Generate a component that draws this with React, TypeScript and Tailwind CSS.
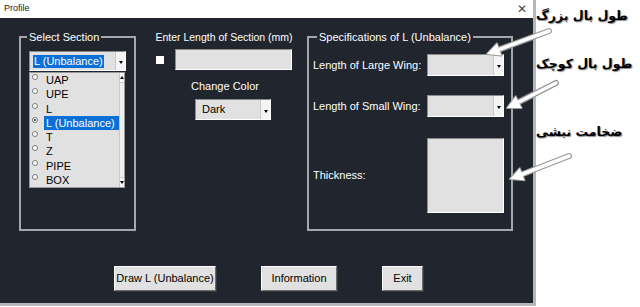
import React from "react";

const sections = ["UAP", "UPE", "L", "L (Unbalance)", "T", "Z", "PIPE", "BOX"];

function DropArrow() {
  return (
    <div className="w-[10px] self-stretch bg-[#f4f4f4] border-l border-[#c8c8c8] flex items-center justify-center">
      <div className="w-0 h-0 border-l-[2.5px] border-r-[2.5px] border-t-[3px] border-l-transparent border-r-transparent border-t-black mt-[3px]" />
    </div>
  );
}

function Combo({ w, h, children }: { w: string; h: string; children?: React.ReactNode }) {
  return (
    <div className={`${w} ${h} flex bg-[#e1e1e1] border border-t-[#8a8a8a] border-l-[#8a8a8a] border-r-[#ffffff] border-b-[#ffffff]`}>
      <div className="flex-1 flex items-center pl-[3px]">{children}</div>
      <DropArrow />
    </div>
  );
}

function Arrow({ x1, y1, x2, y2 }: { x1: number; y1: number; x2: number; y2: number }) {
  const dx = x2 - x1;
  const dy = y2 - y1;
  const len = Math.sqrt(dx * dx + dy * dy);
  const ux = dx / len;
  const uy = dy / len;
  const bx = x2 - ux * 13;
  const by = y2 - uy * 13;
  const px = -uy * 6.5;
  const py = ux * 6.5;
  const head = `${x2},${y2} ${bx + px},${by + py} ${bx - px},${by - py}`;
  return (
    <g>
      <line x1={x1} y1={y1} x2={bx + ux * 2} y2={by + uy * 2} stroke="#9a9a9a" strokeWidth="6" strokeLinecap="round" />
      <polygon points={head} fill="#9a9a9a" stroke="#9a9a9a" strokeWidth="2" strokeLinejoin="round" />
      <line x1={x1} y1={y1} x2={bx + ux * 2} y2={by + uy * 2} stroke="#ffffff" strokeWidth="3.5" strokeLinecap="round" />
      <polygon points={head} fill="#ffffff" />
    </g>
  );
}

function Button({ w, label }: { w: string; label: string }) {
  return (
    <div className={`${w} h-[25px] flex items-center justify-center bg-[#e1e1e1] text-black border border-t-[#ffffff] border-l-[#ffffff] border-r-[#6b6b6b] border-b-[#6b6b6b] shadow-[1px_1px_0_#3a3a3a]`}>
      {label}
    </div>
  );
}

export default function App() {
  return (
    <div className="relative w-[640px] h-[307px] bg-white flex overflow-hidden font-['Liberation_Sans',sans-serif] text-[11px]">
      {/* window */}
      <div className="w-[536px] shrink-0 h-[306px] flex flex-col border-r-[3px] border-b-[3px] border-[#b4b8bc]">
        <div className="h-[18px] flex items-center justify-between px-[4px] bg-white text-[9px] text-[#222]">
          <span>Profile</span>
          <span className="text-[12px] text-[#444] mr-[2px]">✕</span>
        </div>
        <div className="flex-1 bg-[#21262e] text-white">
          <div className="flex pt-[12px] pl-[19px]">
            {/* Select Section */}
            <fieldset className="w-[117px] h-[201px] border-2 border-[#a4a8ac] pl-[8px]">
              <legend className="px-[2px] -ml-[2px] leading-[14px]">Select Section</legend>
              <div className="mt-[7px]">
                <Combo w="w-[97px]" h="h-[20px]">
                  <span className="bg-[#0a6fd6] text-white px-[1px] leading-[13px]">L (Unbalance)</span>
                </Combo>
              </div>
              <div className="w-[96px] h-[116px] mt-[1px] flex bg-[#e1e1e1] text-black border border-[#9a9a9a]">
                <div className="flex-1 flex flex-col">
                  {sections.map((s, i) => (
                    <div key={s} className="h-[14.4px] flex items-center relative pl-[14px]">
                      <div className="absolute left-[2px] top-[1px] w-[6px] h-[6px] rounded-full bg-white border border-[#777] flex items-center justify-center">
                        {i === 3 && <div className="w-[2px] h-[2px] rounded-full bg-[#333]" />}
                      </div>
                      <span className={i === 3 ? "bg-[#0a6fd6] text-white pl-[2px] pr-[3px] w-[75px] leading-[14px]" : "pl-[2px] leading-[14px]"}>{s}</span>
                    </div>
                  ))}
                </div>
                <div className="w-[10px] flex flex-col justify-between bg-[#efefef] border-l border-[#c8c8c8]">
                  <div className="h-[10px] bg-[#f8f8f8] border-b border-[#c8c8c8] flex items-center justify-center">
                    <div className="w-0 h-0 border-l-[2.5px] border-r-[2.5px] border-b-[3px] border-l-transparent border-r-transparent border-b-black" />
                  </div>
                  <div className="h-[10px] bg-[#f8f8f8] border-t border-[#c8c8c8] flex items-center justify-center">
                    <div className="w-0 h-0 border-l-[2.5px] border-r-[2.5px] border-t-[3px] border-l-transparent border-r-transparent border-t-black" />
                  </div>
                </div>
              </div>
            </fieldset>

            {/* middle */}
            <div className="w-[138px] ml-[19px] flex flex-col">
              <div className="text-center leading-[14px] whitespace-nowrap text-[10.5px] -mx-[3px]">Enter Length of Section (mm)</div>
              <div className="flex items-center mt-[5px]">
                <div className="w-[8px] h-[8px] bg-white ml-[1px]" />
                <div className="w-[117px] h-[21px] ml-[11px] bg-[#e1e1e1] border border-t-[#8a8a8a] border-l-[#8a8a8a] border-r-white border-b-white" />
              </div>
              <div className="text-center leading-[14px] mt-[9px] ml-[2px]">Change Color</div>
              <div className="ml-[40px] mt-[6px] text-black">
                <Combo w="w-[76px]" h="h-[21px]">
                  <span className="pl-[3px]">Dark</span>
                </Combo>
              </div>
            </div>

            {/* Specifications */}
            <fieldset className="w-[206px] h-[201px] ml-[14px] border-2 border-[#a4a8ac] pl-[4px] pr-[7px]">
              <legend className="px-[2px] ml-[4px] leading-[14px]">Specifications of L (Unbalance)</legend>
              <div className="flex items-center justify-between mt-[10px]">
                <span>Length of Large Wing:</span>
                <Combo w="w-[77px]" h="h-[22px]" />
              </div>
              <div className="flex items-center justify-between mt-[19px]">
                <span>Length of Small Wing:</span>
                <Combo w="w-[77px]" h="h-[22px]" />
              </div>
              <div className="flex items-center justify-between mt-[21px]">
                <span>Thickness:</span>
                <div className="w-[77px] h-[75px] bg-[#e1e1e1] border border-t-[#8a8a8a] border-l-[#8a8a8a] border-r-white border-b-white" />
              </div>
            </fieldset>
          </div>

          <div className="flex gap-[45px] pl-[114px] mt-[35px]">
            <Button w="w-[102px]" label="Draw L (Unbalance)" />
            <Button w="w-[76px]" label="Information" />
            <Button w="w-[41px]" label="Exit" />
          </div>
        </div>
      </div>

      {/* annotations */}
      <div className="flex-1 min-w-0 flex flex-col items-end pr-[4px] font-['DejaVu_Sans',sans-serif] font-bold text-[12.5px] text-black whitespace-nowrap [text-shadow:1px_1px_1px_#8a8a8a]" dir="rtl">
        <div className="mt-[5px] leading-[22px]">طول بال بزرگ</div>
        <div className="mt-[26px] leading-[22px]">طول بال کوچک</div>
        <div className="mt-[46px] leading-[22px] mr-[14px]">ضخامت نبشی</div>
      </div>

      <svg className="absolute inset-0 pointer-events-none" width="640" height="307">
        <Arrow x1={549} y1={31} x2={487} y2={54} />
        <Arrow x1={556} y1={83} x2={507} y2={108} />
        <Arrow x1={569} y1={156} x2={510} y2={179} />
      </svg>
    </div>
  );
}
